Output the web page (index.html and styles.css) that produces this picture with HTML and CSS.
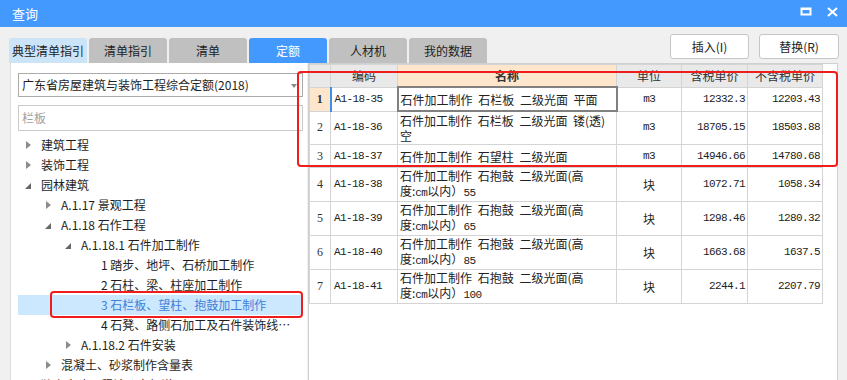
FILE: index.html
```html
<!DOCTYPE html>
<html>
<head>
    <title>查询</title>
    <link rel="stylesheet" href="styles.css">
</head>
<body>
<div class="window">
    <div class="titlebar">
        <span class="title">查询</span>
        <div class="win-btns">
            <svg width="12" height="10" viewBox="0 0 12 10"><rect x="1.5" y="1.5" width="9" height="6" fill="none" stroke="#fff" stroke-width="2"/><rect x="1" y="1" width="10" height="2" fill="#fff"/></svg>
            <svg width="11" height="10" viewBox="0 0 11 10"><path d="M1 1 L10 9 M10 1 L1 9" stroke="#fff" stroke-width="2"/></svg>
        </div>
    </div>

    <div class="toolbar">
        <div class="tabs">
            <div class="tab tab-light">典型清单指引</div>
            <div class="tab">清单指引</div>
            <div class="tab">清单</div>
            <div class="tab tab-active">定额</div>
            <div class="tab">人材机</div>
            <div class="tab">我的数据</div>
        </div>
        <div class="actions">
            <button class="btn">插入(I)</button>
            <button class="btn btn-wide">替换(R)</button>
        </div>
    </div>

    <div class="main">
        <div class="left">
            <div class="combo">广东省房屋建筑与装饰工程综合定额(2018)<span class="caret"></span></div>
            <div class="search">栏板</div>
            <ul class="tree">
                <li class="node"><span class="toggle closed"></span>建筑工程</li>
                <li class="node"><span class="toggle closed"></span>装饰工程</li>
                <li class="node"><span class="toggle open"></span>园林建筑</li>
                <li class="node lv1"><span class="toggle closed"></span>A.1.17 景观工程</li>
                <li class="node lv1"><span class="toggle open"></span>A.1.18 石作工程</li>
                <li class="node lv2"><span class="toggle open"></span>A.1.18.1 石件加工制作</li>
                <li class="node lv3"><span class="toggle"></span>1 踏步、地坪、石桥加工制作</li>
                <li class="node lv3"><span class="toggle"></span>2 石柱、梁、柱座加工制作</li>
                <li class="node lv3 selected"><span class="toggle"></span>3 石栏板、望柱、抱鼓加工制作</li>
                <li class="node lv3"><span class="toggle"></span><span class="label">4 石凳、路侧石加工及石件装饰线条加工制作</span></li>
                <li class="node lv2"><span class="toggle closed"></span>A.1.18.2 石件安装</li>
                <li class="node lv1"><span class="toggle closed"></span>混凝土、砂浆制作含量表</li>
                <li class="node"><span class="toggle"></span>独立土建工程计价定额说明</li>
            </ul>
        </div>

        <div class="right">
            <table class="grid">
                <colgroup>
                    <col style="width:21px"><col style="width:67px"><col style="width:219px">
                    <col style="width:65px"><col style="width:66px"><col style="width:75px">
                </colgroup>
                <thead>
                    <tr>
                        <th class="num"></th>
                        <th>编码</th>
                        <th class="hl strong">名称</th>
                        <th>单位</th>
                        <th>含税单价</th>
                        <th>不含税单价</th>
                    </tr>
                </thead>
                <tbody>
                    <tr class="one current">
                        <td class="num hl">1</td>
                        <td class="code mark-left">A1-18-35</td>
                        <td class="name editing">石件加工制作 石栏板 二级光面 平面</td>
                        <td class="unit mono">m3</td>
                        <td class="price">12332.3</td>
                        <td class="price">12203.43</td>
                    </tr>
                    <tr class="two">
                        <td class="num">2</td>
                        <td class="code">A1-18-36</td>
                        <td class="name">石件加工制作 石栏板 二级光面 镂(透)<br>空</td>
                        <td class="unit mono">m3</td>
                        <td class="price">18705.15</td>
                        <td class="price">18503.88</td>
                    </tr>
                    <tr class="one">
                        <td class="num">3</td>
                        <td class="code">A1-18-37</td>
                        <td class="name">石件加工制作 石望柱 二级光面</td>
                        <td class="unit mono">m3</td>
                        <td class="price">14946.66</td>
                        <td class="price">14780.68</td>
                    </tr>
                    <tr class="two">
                        <td class="num">4</td>
                        <td class="code">A1-18-38</td>
                        <td class="name">石件加工制作 石抱鼓 二级光面(高<br>度:<span class="sm">cm</span>以内）<span class="sm">55</span></td>
                        <td class="unit">块</td>
                        <td class="price">1072.71</td>
                        <td class="price">1058.34</td>
                    </tr>
                    <tr class="two">
                        <td class="num">5</td>
                        <td class="code">A1-18-39</td>
                        <td class="name">石件加工制作 石抱鼓 二级光面(高<br>度:<span class="sm">cm</span>以内）<span class="sm">65</span></td>
                        <td class="unit">块</td>
                        <td class="price">1298.46</td>
                        <td class="price">1280.32</td>
                    </tr>
                    <tr class="two">
                        <td class="num">6</td>
                        <td class="code">A1-18-40</td>
                        <td class="name">石件加工制作 石抱鼓 二级光面(高<br>度:<span class="sm">cm</span>以内）<span class="sm">85</span></td>
                        <td class="unit">块</td>
                        <td class="price">1663.68</td>
                        <td class="price">1637.5</td>
                    </tr>
                    <tr class="two">
                        <td class="num">7</td>
                        <td class="code">A1-18-41</td>
                        <td class="name">石件加工制作 石抱鼓 二级光面(高<br>度:<span class="sm">cm</span>以内）<span class="sm">100</span></td>
                        <td class="unit">块</td>
                        <td class="price">2244.1</td>
                        <td class="price">2207.79</td>
                    </tr>
                </tbody>
            </table>
        </div>
    </div>

    <div class="redbox redbox-table"></div>
    <div class="redbox redbox-tree"></div>
</div>
</body>
</html>
```

FILE: styles.css
```css
body {
    margin: 0;
    padding: 0;
    font-family: "Noto Sans CJK SC", "Liberation Sans", sans-serif;
    font-size: 12px;
    color: #222222;
    background-color: #f0f0f0;
}
.window {
    position: relative;
    width: 847px;
    height: 380px;
    overflow: hidden;
    background-color: #f0f0f0;
}

/* title bar */
.titlebar {
    height: 27px;
    background-color: #4499fe;
    display: flex;
    align-items: center;
    justify-content: space-between;
    padding: 0 9px 0 12px;
}
.title {
    color: #ffffff;
    font-size: 13px;
    line-height: 27px;
}
.win-btns {
    display: flex;
    gap: 15px;
    align-items: center;
    padding-bottom: 3px;
}
.win-btns svg {
    display: block;
}

/* tabs + buttons */
.toolbar {
    height: 36px;
    display: flex;
    justify-content: space-between;
    padding: 0 8px 0 9px;
}
.tabs {
    display: flex;
    gap: 2px;
    align-items: flex-end;
}
.tab {
    width: 78px;
    height: 25px;
    line-height: 25px;
    text-align: center;
    background-color: #c0c0c0;
    border-radius: 3px 3px 0 0;
    font-size: 12px;
    color: #222222;
}
.tab-light {
    background-color: #cce4f7;
}
.tab-active {
    background-color: #4499fe;
    color: #ffffff;
}
.actions {
    display: flex;
    gap: 10px;
    padding-top: 7px;
}
.btn {
    width: 79px;
    height: 25px;
    background-color: #ffffff;
    border: 1px solid #c6c6c6;
    border-radius: 3px;
    font-family: "Noto Sans CJK SC", "Liberation Sans", sans-serif;
    font-size: 12px;
    color: #222222;
    padding: 0;
}
.btn-wide {
    width: 80px;
}

/* main area */
.main {
    display: flex;
    height: 317px;
    padding-left: 10px;
}
.left {
    width: 297px;
    background-color: #ffffff;
    border-left: 1px solid #dcdcdc;
    padding: 10px 0 0 7px;
    box-sizing: border-box;
    flex: none;
}
.combo {
    width: 285px;
    height: 24px;
    box-sizing: border-box;
    border: 1px solid #ababab;
    line-height: 22px;
    padding-left: 3px;
    position: relative;
    color: #1e1e1e;
}
.caret {
    position: absolute;
    right: 5px;
    top: 10px;
    border-top: 4px solid #8a8a8a;
    border-left: 3px solid transparent;
    border-right: 3px solid transparent;
}
.search {
    width: 285px;
    height: 26px;
    box-sizing: border-box;
    border: 1px solid #cacaca;
    margin-top: 8px;
    line-height: 24px;
    padding-left: 3px;
    color: #a0a0a0;
}
.tree {
    list-style: none;
    margin: 4px 0 0 0;
    padding: 0;
    width: 284px;
}
.node {
    height: 20px;
    line-height: 20px;
    display: flex;
    align-items: center;
    white-space: nowrap;
    color: #1e1e1e;
}
.node.lv1 { padding-left: 20px; }
.node.lv2 { padding-left: 40px; }
.node.lv3 { padding-left: 60px; }
.node.selected {
    background-color: #cce8ff;
    color: #3f80d8;
}
.label {
    overflow: hidden;
    text-overflow: ellipsis;
    width: 190px;
}
.toggle {
    width: 23px;
    height: 20px;
    flex: none;
    position: relative;
}
.toggle.closed::before {
    content: "";
    position: absolute;
    left: 8px;
    top: 6px;
    border-left: 5px solid #8c8c8c;
    border-top: 4px solid transparent;
    border-bottom: 4px solid transparent;
}
.toggle.open::before {
    content: "";
    position: absolute;
    left: 7px;
    top: 8px;
    border-right: 6px solid #666666;
    border-top: 6px solid transparent;
}

/* grid */
.right {
    margin-left: 1px;
    width: 530px;
    box-sizing: border-box;
    background-color: #ffffff;
    border-left: 1px solid #d0d0d0;
    border-right: 1px solid #d0d0d0;
    border-top: 1px solid #d0d0d0;
    flex: none;
}
.grid {
    border-collapse: collapse;
    table-layout: fixed;
    width: 513px;
    font-size: 12px;
}
.grid th,
.grid td {
    border: 1px solid #d4d4d4;
    padding: 0 3px;
    overflow: hidden;
}
.grid th {
    height: 21px;
    background-color: #e9e9e9;
    font-weight: normal;
    line-height: 14px;
    color: #333333;
}
.grid th.strong {
    font-weight: bold;
}
.grid th.hl,
.grid td.hl {
    background-color: #fde6cc;
}
.grid tr.one td {
    height: 22px;
}
.grid tr.two td {
    height: 32px;
}
.grid td {
    line-height: 15px;
    vertical-align: middle;
}
.grid td.num {
    text-align: center;
    padding: 0;
    font-family: "Liberation Serif", serif;
    font-size: 12px;
    color: #333333;
}
.grid tr.current td.num {
    font-weight: bold;
}
.grid td.code,
.grid td.price,
.mono {
    font-family: "Liberation Mono", monospace;
    font-size: 11px;
    letter-spacing: -0.6px;
}
.grid td.price {
    text-align: right;
    padding-right: 2px;
}
.grid td.unit {
    text-align: center;
}
.grid td.mark-left {
    border-left: 2px solid #3d8fe8;
}
.grid td.name {
    padding-left: 2px;
    padding-right: 0;
    word-spacing: 3px;
    white-space: nowrap;
}
.grid td.editing {
    border: 2px solid #808080;
}
.sm {
    font-family: "Liberation Mono", monospace;
    font-size: 11px;
    letter-spacing: -0.6px;
    word-spacing: 0;
}

/* red annotation boxes */
.redbox {
    position: absolute;
    border: 2px solid #f01d1d;
    border-radius: 4px;
}
.redbox-table {
    left: 297px;
    top: 71px;
    width: 537px;
    height: 92px;
}
.redbox-tree {
    left: 50px;
    top: 291px;
    width: 249px;
    height: 23px;
}
```
